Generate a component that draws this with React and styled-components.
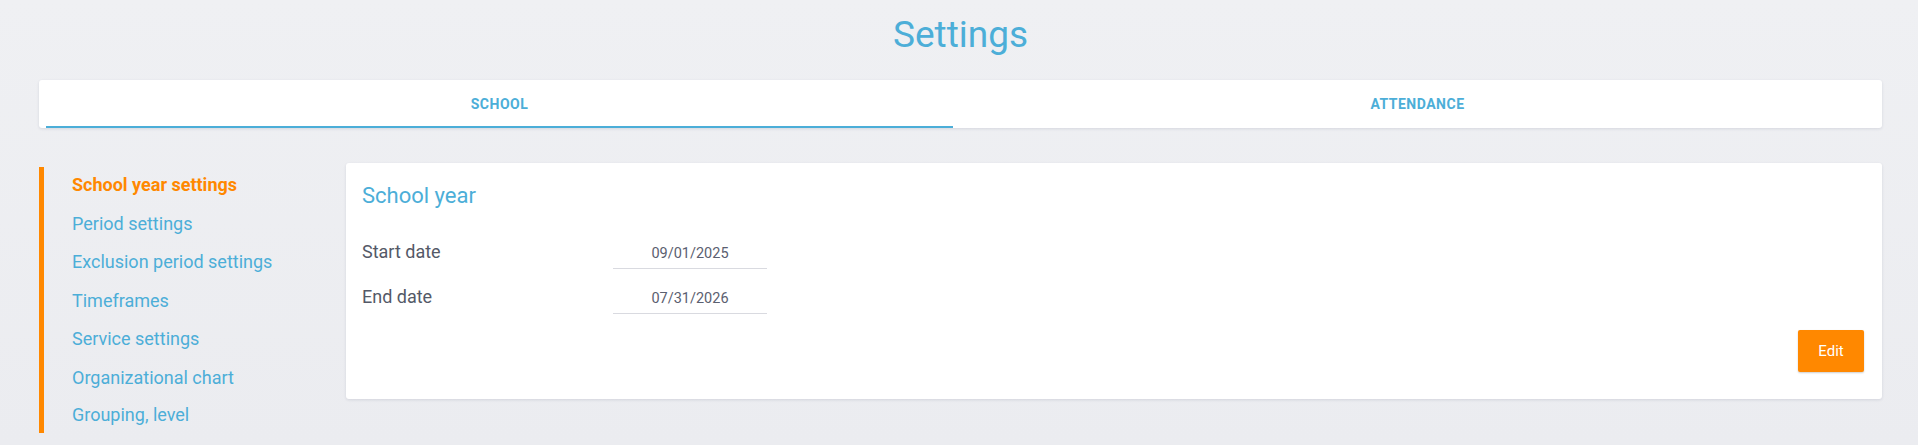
import React, { useState } from "react";
import styled, { createGlobalStyle } from "styled-components";

const GlobalStyle = createGlobalStyle`
  html, body {
    margin: 0;
    padding: 0;
  }
  body {
    font-family: Roboto, "Liberation Sans", Arial, sans-serif;
    background: linear-gradient(180deg, #eff0f3 0%, #ebecf0 100%);
    min-height: 445px;
  }
`;

const BLUE = "#4caed8";
const ORANGE = "#ff8800";

const menu = [
  "School year settings",
  "Period settings",
  "Exclusion period settings",
  "Timeframes",
  "Service settings",
  "Organizational chart",
  "Grouping, level",
];

const StPage = styled.div`
  padding: 15px 36px 0 39px;
`;

const StTitle = styled.h1`
  margin: 0 0 25px;
  text-align: center;
  font-size: 37px;
  line-height: 40px;
  font-weight: 400;
  color: ${BLUE};
`;

const StTabBar = styled.div`
  display: grid;
  grid-template-columns: 907fr 929fr;
  height: 48px;
  padding-left: 7px;
  background: #fff;
  border-radius: 3px;
  box-shadow: 0 1px 3px rgba(40, 50, 80, 0.12);
`;

const StTab = styled.button`
  border: none;
  background: transparent;
  margin: 0;
  padding: 0;
  font-family: inherit;
  font-size: 14px;
  font-weight: 700;
  letter-spacing: 0.5px;
  text-transform: uppercase;
  color: ${BLUE};
  cursor: pointer;
  border-bottom: 2px solid ${(p) => (p.$active ? BLUE : "transparent")};
  padding-top: 2px;
`;

const StBody = styled.div`
  display: flex;
  gap: 24px;
  margin-top: 35px;
  align-items: flex-start;
`;

const StSide = styled.ul`
  width: 250px;
  flex: none;
  list-style: none;
  margin: 4px 0 0;
  padding: 0 0 0 28px;
  border-left: 5px solid ${ORANGE};
`;

const StSideItem = styled.li`
  font-size: 18px;
  line-height: 38.5px;
  white-space: nowrap;
  cursor: pointer;
  color: ${(p) => (p.$active ? ORANGE : BLUE)};
  font-weight: ${(p) => (p.$active ? 700 : 400)};

  &:first-child {
    margin-top: -1px;
  }
  &:last-child {
    line-height: 36px;
  }
`;

const StCard = styled.section`
  flex: 1;
  background: #fff;
  border-radius: 3px;
  box-shadow: 0 1px 3px rgba(40, 50, 80, 0.12);
  padding: 20px 18px 27px 16px;
`;

const StHeading = styled.h2`
  margin: 0 0 31px;
  font-size: 22px;
  line-height: 26px;
  font-weight: 400;
  color: ${BLUE};
`;

const StRow = styled.div`
  display: flex;
  align-items: baseline;
  height: 45px;
`;

const StLabel = styled.div`
  width: 251px;
  font-size: 18px;
  line-height: 24px;
  color: #545967;
`;

const StDate = styled.div`
  width: 154px;
  text-align: center;
  font-size: 14.5px;
  line-height: 20px;
  padding-bottom: 4px;
  color: #5b6070;
  border-bottom: 1px solid #d9dae0;
`;

const StFooter = styled.div`
  display: flex;
  justify-content: flex-end;
`;

const StEditBtn = styled.button`
  width: 66px;
  height: 42px;
  border: none;
  border-radius: 2px;
  background: ${ORANGE};
  color: #fff;
  font-family: inherit;
  font-size: 15px;
  font-weight: 400;
  box-shadow: 0 1px 2px rgba(0, 0, 0, 0.2);
  cursor: pointer;
`;

export default function App() {
  const [tab, setTab] = useState("school");
  const [active, setActive] = useState(0);

  return (
    <>
      <GlobalStyle />
      <StPage>
        <StTitle>Settings</StTitle>
        <StTabBar>
          <StTab $active={tab === "school"} onClick={() => setTab("school")}>School</StTab>
          <StTab $active={tab === "attendance"} onClick={() => setTab("attendance")}>Attendance</StTab>
        </StTabBar>
        <StBody>
          <StSide>
            {menu.map((m, i) => (
              <StSideItem key={m} $active={i === active} onClick={() => setActive(i)}>
                {m}
              </StSideItem>
            ))}
          </StSide>
          <StCard>
            <StHeading>School year</StHeading>
            <StRow>
              <StLabel>Start date</StLabel>
              <StDate>09/01/2025</StDate>
            </StRow>
            <StRow>
              <StLabel>End date</StLabel>
              <StDate>07/31/2026</StDate>
            </StRow>
            <StFooter>
              <StEditBtn>Edit</StEditBtn>
            </StFooter>
          </StCard>
        </StBody>
      </StPage>
    </>
  );
}
